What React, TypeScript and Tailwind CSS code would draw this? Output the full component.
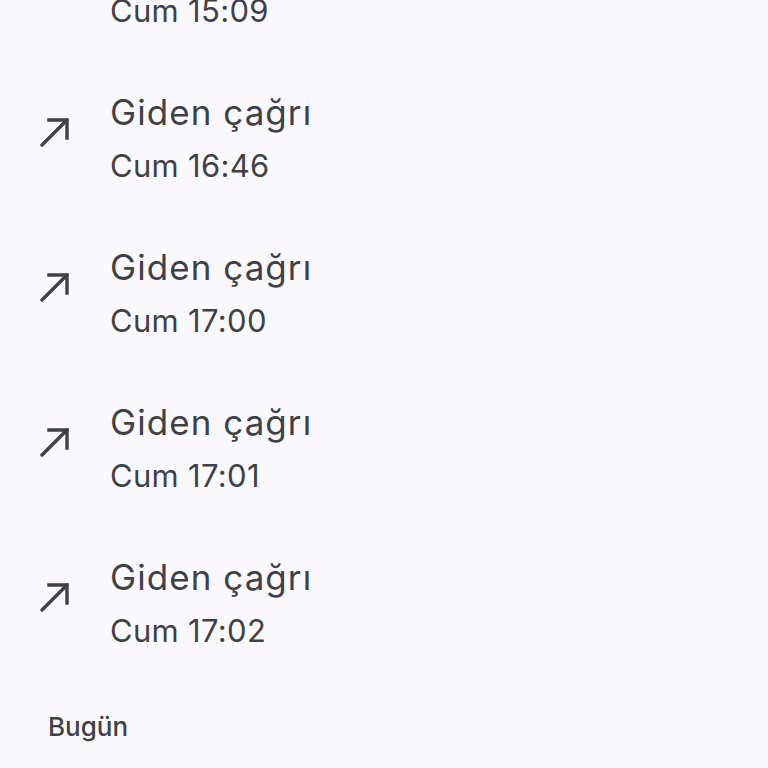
const calls = ["15:09", "16:46", "17:00", "17:01", "17:02"];

function OutgoingArrow() {
  return (
    <svg viewBox="0 0 30 30" className="w-[30px] h-[30px]" fill="none" stroke="#404147" strokeWidth="3.4">
      <path d="M2 28 L27 3" strokeLinecap="round" />
      <path d="M9 3 H27 V21" strokeLinecap="square" />
    </svg>
  );
}

export default function App() {
  return (
    <div
      className="w-[768px] h-[768px] overflow-hidden bg-[#fbf9fd] text-[#404147]"
      style={{ fontFamily: "Inter, Roboto, sans-serif" }}
    >
      <div className="flex flex-col -mt-[95px]">
        {calls.map((time) => (
          <div key={time} className="h-[155px] flex flex-row items-center">
            <div className="w-[110px] pl-[40px] -mt-[12px]">
              <OutgoingArrow />
            </div>
            <div className="flex flex-col gap-[12px]">
              <p className="text-[35px] leading-[44px] tracking-[0.03em]">Giden çağrı</p>
              <p className="text-[31px] leading-[40px] tracking-[0.01em]">Cum {time}</p>
            </div>
          </div>
        ))}
        <p className="pl-[48px] mt-[30px] text-[26px] leading-[34px] font-medium">Bugün</p>
      </div>
    </div>
  );
}
